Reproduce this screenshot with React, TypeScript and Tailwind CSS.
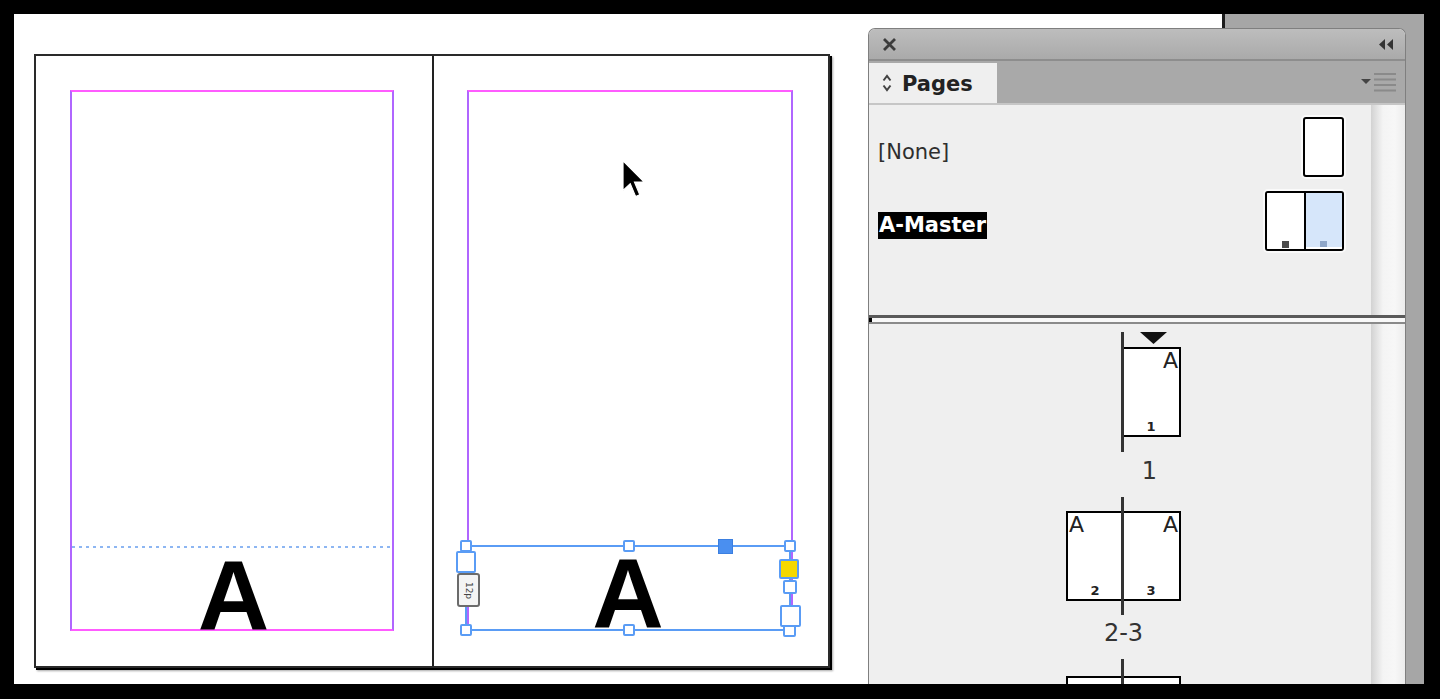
import React from "react";

const Handle = ({ className }: { className: string }) => (
  <div
    className={`absolute bg-white border-2 border-[#5a9cf5] rounded-[2px] ${className}`}
  />
);

const Cursor = () => (
  <svg
    className="absolute left-[608px] top-[146px]"
    width="23"
    height="40"
    viewBox="0 0 12 21"
  >
    <path
      d="M0.5 0.5 L0.5 16 L4.3 12.4 L7.1 19.2 L9.3 18.3 L6.5 11.6 L11.6 11.6 Z"
      fill="#000"
      stroke="#fff"
      strokeWidth="0.6"
    />
  </svg>
);

const Canvas = () => (
  <div className="relative flex-none w-[1208px] h-full bg-white pl-[20px] pt-[40px]">
    <div className="flex w-[796px] h-[614px] border-2 border-[#2a2a2a] shadow-[2px_2px_0_0_#000,3px_3px_2px_0_rgba(0,0,0,0.35)]">
      {/* left page */}
      <div className="w-[396px] h-full pl-[34px] pr-[38px] pt-[34px] pb-[35px]">
        <div className="h-full flex flex-col justify-end border-2 border-x-[#b066ff] border-y-[#ff5cff]">
          <div className="h-[2px] bg-[linear-gradient(to_right,#8db6f2_50%,transparent_50%)] bg-[length:7px_2px] bg-repeat-x" />
          <div className="h-[81px] flex justify-center pl-[3px]">
            <span className="-mt-[3px] font-['Liberation_Sans',Arial,sans-serif] font-bold text-[99px] leading-none text-black">
              A
            </span>
          </div>
        </div>
      </div>
      {/* spine */}
      <div className="w-[2px] h-full bg-[#222]" />
      {/* right page */}
      <div className="flex-1 h-full pl-[33px] pr-[35px] pt-[34px] pb-[35px]">
        <div className="h-full flex flex-col justify-end border-2 border-x-[#b066ff] border-y-[#ff5cff]">
          <div className="relative -ml-[4px] -mb-[2px] h-[86px] border-2 border-[#5a9cf5] flex justify-center">
            <span className="-mt-[4px] font-['Liberation_Sans',Arial,sans-serif] font-bold text-[99px] leading-none text-black">
              A
            </span>
            <Handle className="left-[-7px] top-[-7px] w-[12px] h-[12px]" />
            <Handle className="left-[156px] top-[-7px] w-[12px] h-[12px]" />
            <Handle className="left-[317px] top-[-7px] w-[12px] h-[12px]" />
            <div className="absolute left-[251px] top-[-8px] w-[15px] h-[15px] bg-[#4a8ff0] border border-[#3b7fe0]" />
            <Handle className="left-[-11px] top-[4px] w-[20px] h-[22px]" />
            <div className="absolute left-[-10px] top-[26px] w-[23px] h-[34px] bg-[#f4f4f4] border-2 border-[#6b6b6b] rounded-[3px] flex items-center justify-center">
              <span className="rotate-90 font-['DejaVu_Sans',sans-serif] text-[9px] leading-none text-[#444]">
                12p
              </span>
            </div>
            <div className="absolute left-[312px] top-[12px] w-[20px] h-[20px] bg-[#f5d800] border-2 border-[#5a9cf5] rounded-[2px]" />
            <Handle className="left-[316px] top-[33px] w-[14px] h-[14px]" />
            <Handle className="left-[313px] top-[58px] w-[21px] h-[22px]" />
            <Handle className="left-[-7px] top-[77px] w-[12px] h-[12px]" />
            <Handle className="left-[156px] top-[77px] w-[12px] h-[12px]" />
            <Handle className="left-[316px] top-[78px] w-[13px] h-[12px]" />
          </div>
        </div>
      </div>
    </div>
    <Cursor />
  </div>
);

const ScrollColumn = () => (
  <div className="w-[34px] h-full bg-[linear-gradient(to_right,#d2d2d2,#f4f4f4_35%,#f7f7f7_70%,#ececec)]" />
);

const PageLeft = ({ num }: { num: string }) => (
  <div className="h-[90px] bg-white border-2 border-r-0 border-black flex flex-col justify-between items-start pl-[1px]">
    <span className="text-[22px] leading-[24px] text-[#222]">A</span>
    <span className="self-center text-[13px] font-bold leading-[16px] text-[#222]">
      {num}
    </span>
  </div>
);

const PageRight = ({ num }: { num: string }) => (
  <div className="h-[90px] bg-white border-2 border-l-0 border-black flex flex-col justify-between items-end pr-[1px]">
    <span className="text-[22px] leading-[24px] text-[#222]">A</span>
    <span className="self-center text-[13px] font-bold leading-[16px] text-[#222]">
      {num}
    </span>
  </div>
);

const PagesPanel = () => (
  <div className="absolute left-[854px] top-[14px] bottom-0 w-[538px] flex flex-col overflow-hidden rounded-t-[7px] border border-b-0 border-[#7f7f7f] bg-[#efefef] font-['DejaVu_Sans',sans-serif]">
    {/* title bar */}
    <div className="h-[32px] flex-none flex items-center justify-between pl-[13px] pr-[11px] bg-[linear-gradient(to_bottom,#bdbdbd,#aaaaaa)] border-b-2 border-[#8d8d8d]">
      <svg width="15" height="15" viewBox="0 0 15 15">
        <path d="M2 2 L13 13 M13 2 L2 13" stroke="#3c3c3c" strokeWidth="2.8" />
      </svg>
      <svg width="17" height="13" viewBox="0 0 17 13">
        <polygon points="8,1 8,12 2,6.5" fill="#333" />
        <polygon points="16,1 16,12 10,6.5" fill="#333" />
      </svg>
    </div>
    {/* tab row */}
    <div className="h-[44px] flex-none flex bg-[#a9a9a9] border-b-2 border-[#c6c6c6]">
      <div className="w-[128px] mt-[2px] bg-[#efefef] flex items-center gap-[9px] pl-[12px]">
        <svg width="12" height="24" viewBox="0 0 12 24">
          <path
            d="M2.5 9.5 L6 5 L9.5 9.5 M2.5 14.5 L6 19 L9.5 14.5"
            stroke="#444"
            strokeWidth="2"
            fill="none"
          />
        </svg>
        <span className="text-[21px] font-bold leading-[28px] text-[#222] mt-[2px]">
          Pages
        </span>
      </div>
      <div className="flex-1 flex items-center justify-end pr-[8px]">
        <svg width="36" height="22" viewBox="0 0 36 22">
          <polygon points="0,8 10,8 5,13" fill="#444" />
          <path
            d="M13 3 H35 M13 8.5 H35 M13 14 H35 M13 19.5 H35"
            stroke="#8a8a8a"
            strokeWidth="2.2"
          />
        </svg>
      </div>
    </div>
    {/* masters */}
    <div className="h-[210px] flex-none flex">
      <div className="flex-1 flex flex-col pl-[9px] pr-[27px] pt-[12px] gap-[14px]">
        <div className="h-[60px] flex items-center justify-between">
          <span className="mt-[10px] text-[21px] leading-[27px] text-[#2e2e2e]">
            [None]
          </span>
          <div className="w-[41px] h-[60px] bg-white border-2 border-black rounded-[3px] shadow-[0_0_0_2px_#fafafa]" />
        </div>
        <div className="h-[60px] flex items-center justify-between">
          <span className="mt-[9px] px-[1px] bg-black text-white font-bold text-[21px] leading-[27px]">
            A-Master
          </span>
          <div className="w-[79px] h-[60px] flex border-2 border-black rounded-[3px] overflow-hidden shadow-[0_0_0_2px_#fafafa]">
            <div className="flex-1 bg-white flex flex-col justify-end items-center pb-[1px]">
              <div className="w-[7px] h-[7px] bg-[#4a4a4a]" />
            </div>
            <div className="w-[2px] bg-black" />
            <div className="flex-1 bg-[#d6e6fa] flex flex-col justify-end items-center border-b-2 border-white">
              <div className="w-[7px] h-[6px] bg-[#8ea6c8]" />
            </div>
          </div>
        </div>
      </div>
      <ScrollColumn />
    </div>
    {/* divider */}
    <div className="h-[9px] flex-none flex flex-col">
      <div className="h-[3px] bg-[#5a5a5a]" />
      <div className="h-[4px] bg-[#f8f8f8] border-l-[3px] border-black" />
      <div className="h-[2px] bg-[#8a8a8a]" />
    </div>
    {/* pages */}
    <div className="flex-1 flex min-h-0">
      <div className="flex-1 flex flex-col items-center pt-[8px] pl-[7px] text-[#333]">
        {/* page 1 */}
        <div className="flex-none flex w-[115px] h-[120px]">
          <div className="w-[55px]" />
          <div className="w-[3px] bg-[#333]" />
          <div className="w-[57px] flex flex-col">
            <div className="h-[12px] flex justify-center pl-[2px]">
              <svg width="27" height="12" viewBox="0 0 27 12">
                <polygon points="0,0 27,0 13.5,12" fill="#111" />
              </svg>
            </div>
            <div className="mt-[3px]">
              <PageRight num="1" />
            </div>
          </div>
        </div>
        <div className="flex-none mt-[7px] w-[115px] flex justify-end pr-[3px]">
          <span className="w-[57px] text-center text-[24px] leading-[24px]">1</span>
        </div>
        {/* pages 2-3 */}
        <div className="flex-none mt-[14px] flex w-[115px] h-[118px]">
          <div className="w-[55px] flex flex-col justify-center">
            <PageLeft num="2" />
          </div>
          <div className="w-[3px] bg-[#333]" />
          <div className="w-[57px] flex flex-col justify-center">
            <PageRight num="3" />
          </div>
        </div>
        <div className="flex-none mt-[6px] w-[115px] text-center text-[24px] leading-[24px]">
          2-3
        </div>
        {/* next spread, cut off by the panel edge */}
        <div className="flex-none mt-[14px] flex w-[115px] h-[118px]">
          <div className="w-[55px] pt-[17px]">
            <div className="h-[90px] bg-white border-2 border-r-0 border-black" />
          </div>
          <div className="w-[3px] bg-[#333]" />
          <div className="w-[57px] pt-[17px]">
            <div className="h-[90px] bg-white border-2 border-l-0 border-black" />
          </div>
        </div>
      </div>
      <ScrollColumn />
    </div>
  </div>
);

export default function App() {
  return (
    <div className="w-[1440px] h-[699px] overflow-hidden bg-black pt-[14px] pl-[14px] pr-[16px] pb-[15px]">
      <div className="relative flex h-full">
        <Canvas />
        <div className="w-[3px] bg-[#1c1c1c]" />
        <div className="flex-1 bg-[#a6a6a6]" />
        <PagesPanel />
      </div>
    </div>
  );
}
